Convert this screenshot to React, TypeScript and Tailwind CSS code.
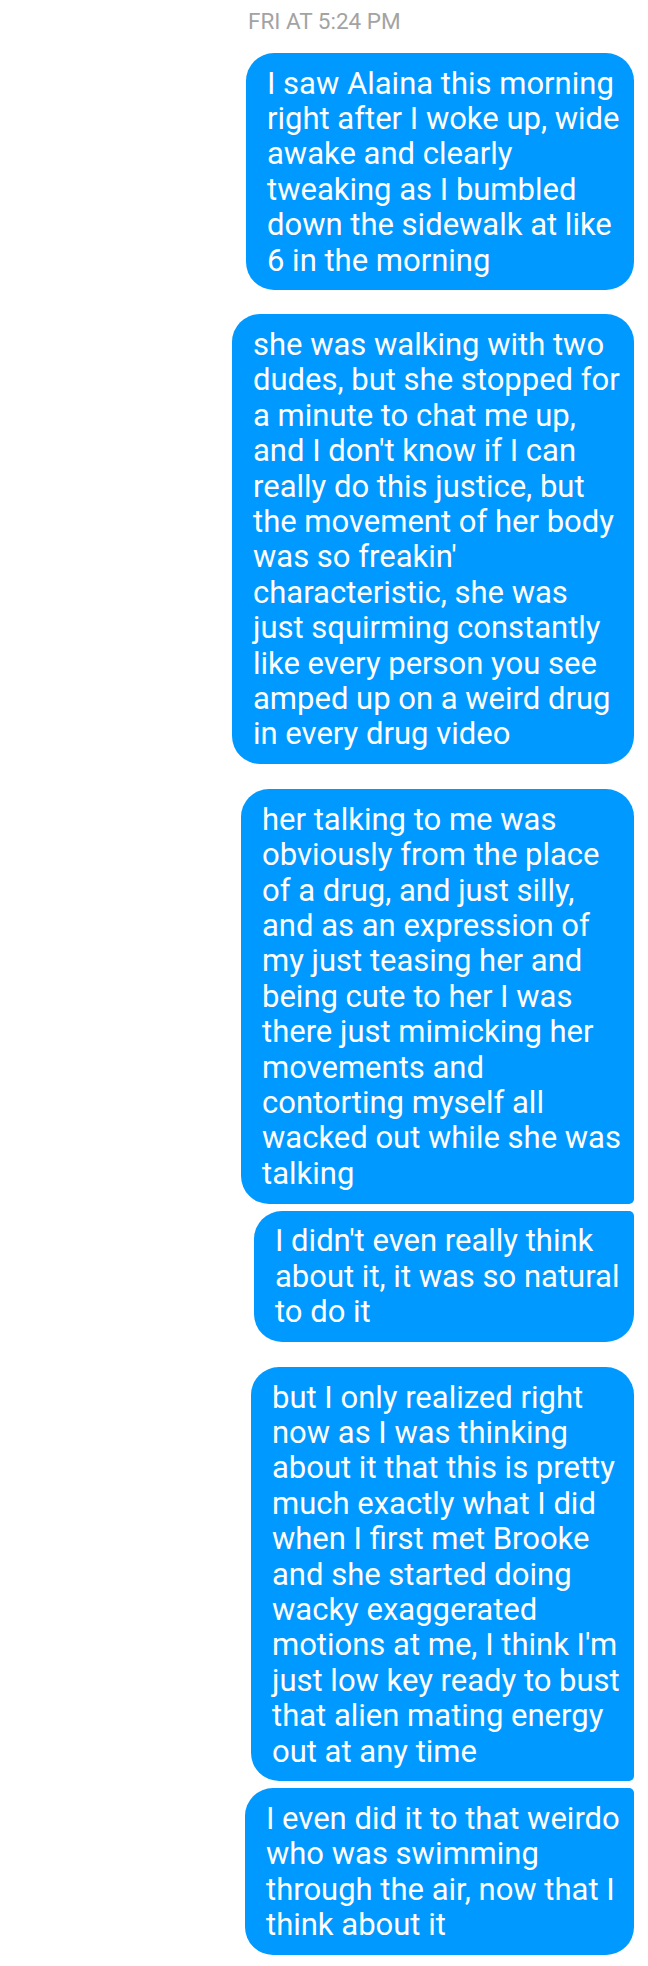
import React from "react"

type Msg = {
    lines: string[]
    width: string
    shape: string
    gap: string
}

const messages: Msg[] = [
    {
        lines: [
            "I saw Alaina this morning",
            "right after I woke up, wide",
            "awake and clearly",
            "tweaking as I bumbled",
            "down the sidewalk at like",
            "6 in the morning",
        ],
        width: "w-[388px]",
        shape: "rounded-[28px]",
        gap: "mt-[19px]",
    },
    {
        lines: [
            "she was walking with two",
            "dudes, but she stopped for",
            "a minute to chat me up,",
            "and I don't know if I can",
            "really do this justice, but",
            "the movement of her body",
            "was so freakin'",
            "characteristic, she was",
            "just squirming constantly",
            "like every person you see",
            "amped up on a weird drug",
            "in every drug video",
        ],
        width: "w-[402px]",
        shape: "rounded-[28px]",
        gap: "mt-[24px]",
    },
    {
        lines: [
            "her talking to me was",
            "obviously from the place",
            "of a drug, and just silly,",
            "and as an expression of",
            "my just teasing her and",
            "being cute to her I was",
            "there just mimicking her",
            "movements and",
            "contorting myself all",
            "wacked out while she was",
            "talking",
        ],
        width: "w-[393px]",
        shape: "rounded-t-[28px] rounded-bl-[28px] rounded-br-[5px]",
        gap: "mt-[25px]",
    },
    {
        lines: [
            "I didn't even really think",
            "about it, it was so natural",
            "to do it",
        ],
        width: "w-[380px]",
        shape: "rounded-b-[28px] rounded-tl-[28px] rounded-tr-[5px]",
        gap: "mt-[7px]",
    },
    {
        lines: [
            "but I only realized right",
            "now as I was thinking",
            "about it that this is pretty",
            "much exactly what I did",
            "when I first met Brooke",
            "and she started doing",
            "wacky exaggerated",
            "motions at me, I think I'm",
            "just low key ready to bust",
            "that alien mating energy",
            "out at any time",
        ],
        width: "w-[383px]",
        shape: "rounded-t-[28px] rounded-bl-[28px] rounded-br-[5px]",
        gap: "mt-[25px]",
    },
    {
        lines: [
            "I even did it to that weirdo",
            "who was swimming",
            "through the air, now that I",
            "think about it",
        ],
        width: "w-[389px]",
        shape: "rounded-b-[28px] rounded-tl-[28px] rounded-tr-[5px]",
        gap: "mt-[7px]",
    },
]

export default function App() {
    return (
        <div className="min-h-[1966px] w-[648px] bg-white font-['Roboto','Liberation_Sans',sans-serif]">
            {/* Timestamp */}
            <div className="pl-[248px] pt-[8px] text-[22.5px] leading-[26px] text-[#a3a3a3]">
                FRI AT 5:24 PM
            </div>

            {/* Message bubbles */}
            <div className="flex flex-col items-end pr-[14px]">
                {messages.map((m, i) => (
                    <div
                        key={i}
                        className={`${m.gap} ${m.width} ${m.shape} bg-[#0099ff] py-[12.5px] pl-[21px] text-[31px] leading-[35.4px] text-white`}
                    >
                        {m.lines.map((line, j) => (
                            <div key={j} className="whitespace-nowrap">
                                {line}
                            </div>
                        ))}
                    </div>
                ))}
            </div>
        </div>
    )
}
